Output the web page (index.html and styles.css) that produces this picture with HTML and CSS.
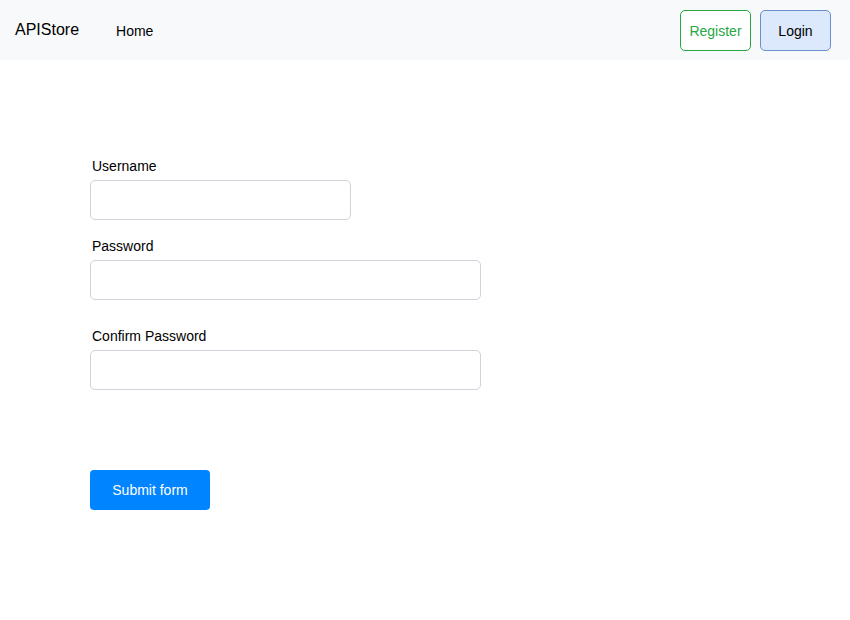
FILE: index.html
```html
<!DOCTYPE html>
<html>
<head>
<meta charset="utf-8">
<link rel="stylesheet" href="styles.css">
</head>
<body>
<nav class="navbar">
  <span class="brand">APIStore</span>
  <a class="nav-link">Home</a>
  <div class="nav-actions">
    <button class="btn btn-register">Register</button>
    <button class="btn btn-login">Login</button>
  </div>
</nav>
<main class="content">
  <form class="form">
    <label class="label">Username</label>
    <input class="input input-short" type="text">
    <label class="label label-pw">Password</label>
    <input class="input input-long" type="password">
    <label class="label label-confirm">Confirm Password</label>
    <input class="input input-long" type="password">
    <button class="submit" type="button">Submit form</button>
  </form>
</main>
</body>
</html>
```
FILE: styles.css
```css
* { box-sizing: border-box; }
body {
  margin: 0;
  font-family: "Liberation Sans", Arial, sans-serif;
  color: #000;
  background: #fff;
}
.navbar {
  height: 60px;
  background: #f8f9fa;
  display: flex;
  align-items: center;
  padding: 0 19px 0 15px;
}
.brand {
  font-size: 16px;
  margin-right: 37px;
}
.nav-link {
  font-size: 14px;
  color: #000;
  padding-top: 2px;
}
.nav-actions {
  margin-left: auto;
  display: flex;
  gap: 9px;
  padding-top: 1px;
}
.btn {
  width: 71px;
  height: 41px;
  font-family: inherit;
  font-size: 14px;
  border-radius: 5px;
  padding: 0;
}
.btn-register {
  background: #fff;
  color: #28a745;
  border: 1.5px solid #28a745;
}
.btn-login {
  background: #dce8fb;
  color: #000;
  border: 1.5px solid #6b8fcc;
}
.content {
  padding: 98px 0 0 90px;
}
.form {
  display: flex;
  flex-direction: column;
  align-items: flex-start;
}
.label {
  font-size: 14px;
  line-height: 16px;
  margin-left: 2px;
  margin-bottom: 6px;
}
.label-pw { margin-top: 18px; }
.label-confirm { margin-top: 28px; }
.input {
  height: 40px;
  border: 1.5px solid #cfd4da;
  border-radius: 5px;
  background: #fff;
  margin: 0;
}
.input-short { width: 261px; }
.input-long { width: 391px; }
.submit {
  margin-top: 80px;
  width: 120px;
  height: 40px;
  background: #0084ff;
  color: #fff;
  border: none;
  border-radius: 4px;
  font-family: inherit;
  font-size: 14px;
  padding: 0;
}
```
